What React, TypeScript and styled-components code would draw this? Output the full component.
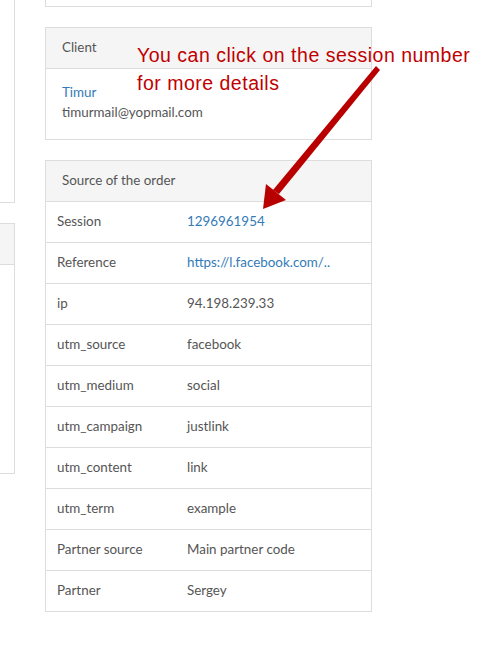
import styled, { createGlobalStyle } from 'styled-components';

const GlobalStyle = createGlobalStyle`
  html, body {
    margin: 0;
    padding: 0;
    background: #ffffff;
  }
  body {
    font-family: Lato, "Open Sans", Arial, sans-serif;
    color: #555555;
  }
`;

const Page = styled.div`
  position: relative;
  display: flex;
  align-items: flex-start;
  width: 489px;
  height: 647px;
  overflow: hidden;
`;

const SideColumn = styled.div`
  width: 15px;
  display: flex;
  flex-direction: column;
  gap: 20px;
  margin-right: 30px;
`;

const SideCard = styled.div<{ height: number; cut?: boolean }>`
  height: ${p => p.height}px;
  border: 1px solid #dddddd;
  border-left: none;
  border-top: ${p => (p.cut ? 'none' : '1px solid #dddddd')};
  background: #ffffff;
`;

const SideHeader = styled.div`
  height: 40px;
  background: #f5f5f5;
  border-bottom: 1px solid #dddddd;
`;

const MainColumn = styled.div`
  width: 327px;
  display: flex;
  flex-direction: column;
  gap: 20px;
`;

const Card = styled.div<{ cut?: boolean }>`
  border: 1px solid #dddddd;
  border-top: ${p => (p.cut ? 'none' : '1px solid #dddddd')};
  background: #ffffff;
`;

const CardHeader = styled.div`
  height: 41px;
  box-sizing: border-box;
  display: flex;
  align-items: center;
  padding: 0 16px 2px;
  background: #f5f5f5;
  border-bottom: 1px solid #dddddd;
  font-size: 13.4px;
  color: #555555;
`;

const CardBody = styled.div`
  padding: 13px 16px 17px;
  font-size: 13.4px;
  line-height: 20px;
`;

const Link = styled.a`
  color: #337ab7;
  text-decoration: none;
`;

const Row = styled.div`
  display: flex;
  align-items: center;
  height: 40px;
  box-sizing: border-box;
  padding-bottom: 2px;
  font-size: 13.4px;
  & + & {
    height: 41px;
    border-top: 1px solid #dddddd;
  }
`;

const Label = styled.div`
  width: 130px;
  padding-left: 11px;
  box-sizing: border-box;
  color: #555555;
`;

const Value = styled.div`
  flex: 1;
  padding-left: 11px;
  color: #555555;
  white-space: nowrap;
`;

const Note = styled.div`
  position: absolute;
  left: 137px;
  top: 41px;
  font-family: "Liberation Sans", Arial, sans-serif;
  font-size: 19.5px;
  line-height: 28px;
  letter-spacing: 0.5px;
  color: #c00000;
  pointer-events: none;
`;

const ArrowLayer = styled.svg`
  position: absolute;
  left: 0;
  top: 0;
  pointer-events: none;
`;

const rows: { label: string; value: string; link?: boolean }[] = [
  { label: 'Session', value: '1296961954', link: true },
  { label: 'Reference', value: 'https://l.facebook.com/..', link: true },
  { label: 'ip', value: '94.198.239.33' },
  { label: 'utm_source', value: 'facebook' },
  { label: 'utm_medium', value: 'social' },
  { label: 'utm_campaign', value: 'justlink' },
  { label: 'utm_content', value: 'link' },
  { label: 'utm_term', value: 'example' },
  { label: 'Partner source', value: 'Main partner code' },
  { label: 'Partner', value: 'Sergey' },
];

const App = () => {
  return (
    <>
      <GlobalStyle />
      <Page>
        <SideColumn>
          <SideCard height={202} cut />
          <SideCard height={249}>
            <SideHeader />
          </SideCard>
        </SideColumn>
        <MainColumn>
          <Card cut style={{ height: 6 }} />
          <Card>
            <CardHeader>Client</CardHeader>
            <CardBody>
              <div><Link href="#">Timur</Link></div>
              <div>timurmail@yopmail.com</div>
            </CardBody>
          </Card>
          <Card>
            <CardHeader>Source of the order</CardHeader>
            {rows.map(r => (
              <Row key={r.label}>
                <Label>{r.label}</Label>
                <Value>{r.link ? <Link href="#">{r.value}</Link> : r.value}</Value>
              </Row>
            ))}
          </Card>
        </MainColumn>
        <Note>
          You can click on the session number
          <br />
          for more details
        </Note>
        <ArrowLayer width="489" height="647" viewBox="0 0 489 647">
          <polygon points="376,66 380,70 279,194 273,190" fill="#b80000" />
          <polygon points="263,209 266,184 286,200" fill="#b80000" />
        </ArrowLayer>
      </Page>
    </>
  );
};

export default App;
